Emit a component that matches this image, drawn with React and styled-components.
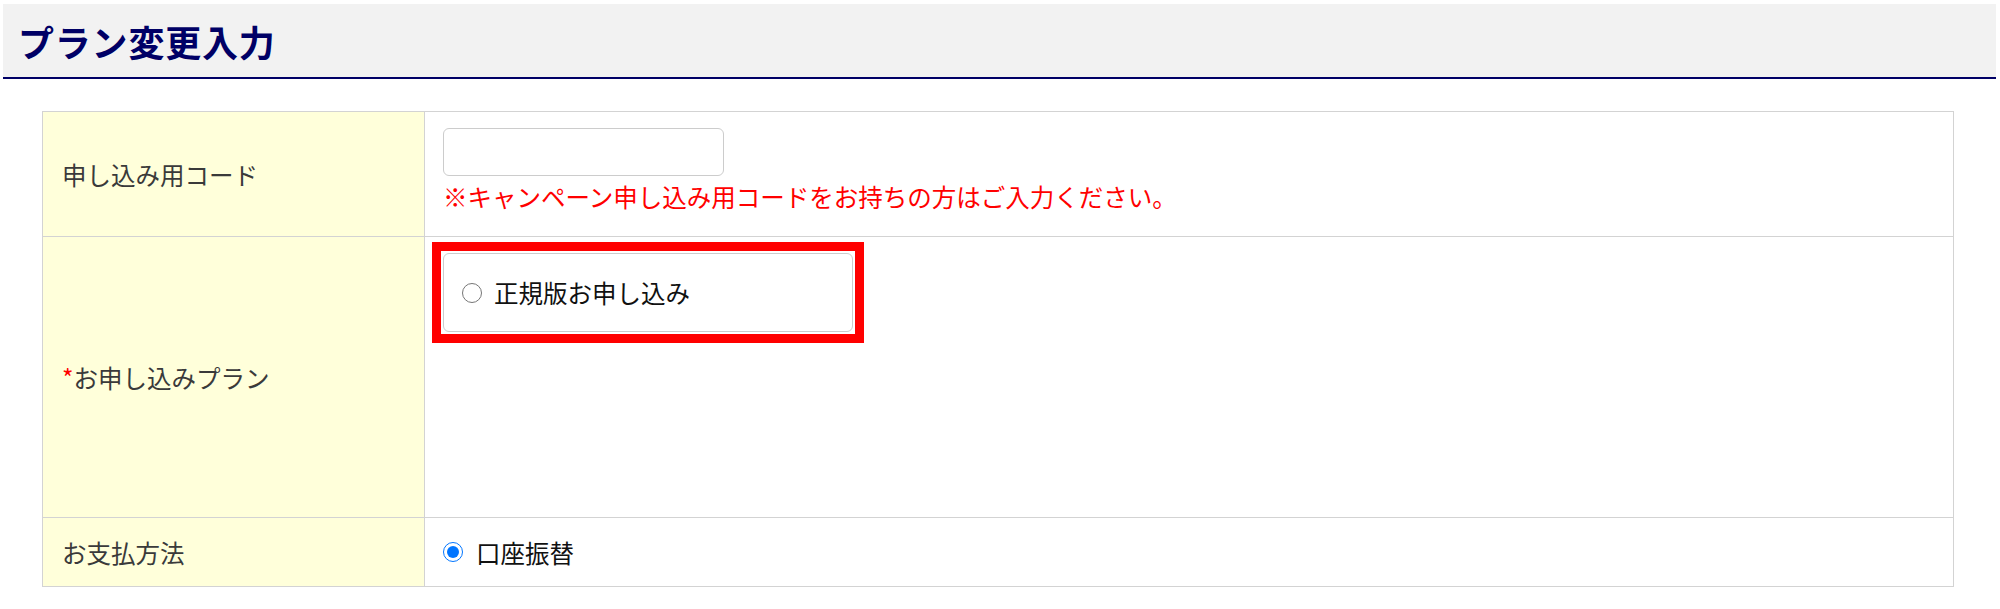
import React from 'react';
import styled, { createGlobalStyle } from 'styled-components';

const GlobalStyle = createGlobalStyle`
    body {
        margin: 0;
        background: #ffffff;
        font-family: "Noto Sans CJK JP", "Noto Sans", sans-serif;
    }
`;

const Page = styled.div`
    padding: 4px 4px 0 3px;
`;

const Header = styled.div`
    height: 73px;
    background-color: #f2f2f2;
    border-bottom: 2px solid #000066;
    display: flex;
    align-items: center;
    padding-left: 15px;
`;

const Title = styled.h1`
    margin: 0;
    font-size: 36px;
    font-weight: 700;
    color: #000066;
    letter-spacing: 0.8px;
`;

const Table = styled.div`
    margin: 32px 42px 0 39px;
    border: 1px solid #d3d3d3;
    border-bottom: none;
`;

const Row = styled.div`
    display: grid;
    grid-template-columns: 382px 1fr;
    min-height: ${p => p.$h}px;
    border-bottom: 1px solid #d3d3d3;
`;

const Label = styled.div`
    background-color: #ffffda;
    border-right: 1px solid #d3d3d3;
    display: flex;
    align-items: center;
    padding-left: 19px;
    font-size: 24.5px;
    color: #3a3a3a;
`;

const Required = styled.span`
    color: #ff0000;
`;

const Cell = styled.div`
    padding: ${p => p.$pad || '16px 18px'};
    display: flex;
    flex-direction: column;
    align-items: flex-start;
    justify-content: ${p => p.$center ? 'center' : 'flex-start'};
`;

const CodeInput = styled.input`
    width: 281px;
    height: 48px;
    box-sizing: border-box;
    border: 1px solid #cccccc;
    border-radius: 6px;
    font-size: 20px;
    padding: 0 10px;
    outline: none;
`;

const Note = styled.div`
    margin-top: 3px;
    font-size: 24.5px;
    line-height: 36px;
    color: #ff0000;
`;

const PlanCard = styled.label`
    position: relative;
    width: 410px;
    height: 79px;
    box-sizing: border-box;
    border: 1px solid #cccccc;
    border-radius: 6px;
    padding: 0 18px;
    display: flex;
    align-items: center;
    gap: 12px;
    font-size: 24.5px;
    color: #111111;

    /* red highlight drawn over the card */
    &::after {
        content: '';
        position: absolute;
        inset: -12px;
        border: 9px solid #ff0000;
        pointer-events: none;
    }
`;

const Choice = styled.label`
    display: flex;
    align-items: center;
    gap: 13px;
    font-size: 24.5px;
    color: #111111;
`;

const Radio = styled.input`
    width: 20px;
    height: 20px;
    margin: 0;
    accent-color: #0075ff;
`;

export default function App() {
    return (
        <Page>
            <GlobalStyle />
            <Header>
                <Title>プラン変更入力</Title>
            </Header>
            <Table>
                <Row $h={124}>
                    <Label>申し込み用コード</Label>
                    <Cell>
                        <CodeInput type="text" />
                        <Note>※キャンペーン申し込み用コードをお持ちの方はご入力ください。</Note>
                    </Cell>
                </Row>
                <Row $h={280}>
                    <Label><Required>*</Required>お申し込みプラン</Label>
                    <Cell>
                        <PlanCard>
                            <Radio type="radio" name="plan" />
                            正規版お申し込み
                        </PlanCard>
                    </Cell>
                </Row>
                <Row $h={68}>
                    <Label>お支払方法</Label>
                    <Cell $center $pad="0 18px">
                        <Choice>
                            <Radio type="radio" name="pay" defaultChecked />
                            口座振替
                        </Choice>
                    </Cell>
                </Row>
            </Table>
        </Page>
    );
}
